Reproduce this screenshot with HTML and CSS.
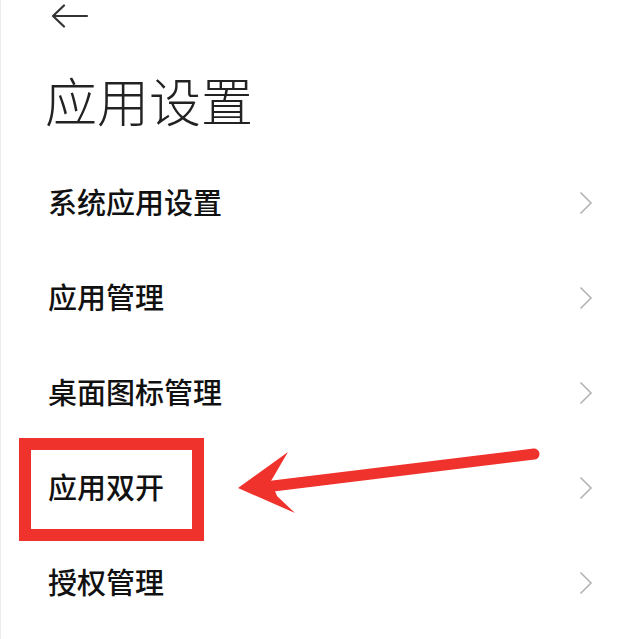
FILE: index.html
```html
<!DOCTYPE html>
<html>
<head>
    <meta charset="UTF-8">
    <title>应用设置</title>
    <link rel="stylesheet" href="styles.css">
</head>
<body>
    <div class="page">
        <div class="topbar">
            <svg class="back" width="38" height="24" viewBox="0 0 38 24">
                <path d="M2 12 H36 M13 1.5 L2 12 L13 22.5" fill="none" stroke="#333" stroke-width="2.2" stroke-linecap="round" stroke-linejoin="round"/>
            </svg>
        </div>
        <h1 class="title">应用设置</h1>

        <ul class="list">
            <li class="row"><span>系统应用设置</span><svg class="chev" width="14" height="24" viewBox="0 0 14 24"><polyline points="1.5,1.5 12,12 1.5,22.5" fill="none" stroke="#b3b3b3" stroke-width="1.6"/></svg></li>
            <li class="row"><span>应用管理</span><svg class="chev" width="14" height="24" viewBox="0 0 14 24"><polyline points="1.5,1.5 12,12 1.5,22.5" fill="none" stroke="#b3b3b3" stroke-width="1.6"/></svg></li>
            <li class="row"><span>桌面图标管理</span><svg class="chev" width="14" height="24" viewBox="0 0 14 24"><polyline points="1.5,1.5 12,12 1.5,22.5" fill="none" stroke="#b3b3b3" stroke-width="1.6"/></svg></li>
            <li class="row"><span>应用双开</span><svg class="chev" width="14" height="24" viewBox="0 0 14 24"><polyline points="1.5,1.5 12,12 1.5,22.5" fill="none" stroke="#b3b3b3" stroke-width="1.6"/></svg></li>
            <li class="row"><span>授权管理</span><svg class="chev" width="14" height="24" viewBox="0 0 14 24"><polyline points="1.5,1.5 12,12 1.5,22.5" fill="none" stroke="#b3b3b3" stroke-width="1.6"/></svg></li>
        </ul>

        <!-- marca roja encima de la captura -->
        <div class="mark-box"></div>
        <svg class="mark-arrow" width="640" height="639" viewBox="0 0 640 639">
            <line x1="272" y1="486" x2="533" y2="454" stroke="#f0322d" stroke-width="11" stroke-linecap="round"/>
            <polygon points="237,488 287,452 270,481 276,496 294,513" fill="#f0322d"/>
        </svg>
    </div>
</body>
</html>
```

FILE: styles.css
```css
html, body {
    margin: 0;
    padding: 0;
    background-color: #fff;
}

body {
    font-family: "Noto Sans CJK SC", "Noto Sans", sans-serif;
    color: #111;
}

.page {
    position: relative;
    width: 640px;
    height: 639px;
    overflow: hidden;
    border-left: 1px solid #ececec;
    box-sizing: border-box;
}

.topbar {
    height: 32px;
    display: flex;
    align-items: center;
    padding-left: 50px;
}

.title {
    margin: 38px 0 25px 0;
    padding-left: 44px;
    font-size: 52px;
    font-weight: 300;
    line-height: 60px;
    color: #222;
}

.list {
    list-style: none;
    margin: 0;
    padding: 0;
}

.row {
    height: 95px;
    display: flex;
    align-items: center;
    justify-content: space-between;
    padding: 0 47px 0 47px;
    font-size: 29px;
    font-weight: 500;
    line-height: 40px;
}

.row span {
    margin-top: -3px;
}

.chev {
    display: block;
}

.mark-box {
    position: absolute;
    left: 18px;
    top: 438px;
    width: 185px;
    height: 103px;
    border: 12px solid #f0322d;
    box-sizing: border-box;
}

.mark-arrow {
    position: absolute;
    left: 0;
    top: 0;
}
```
